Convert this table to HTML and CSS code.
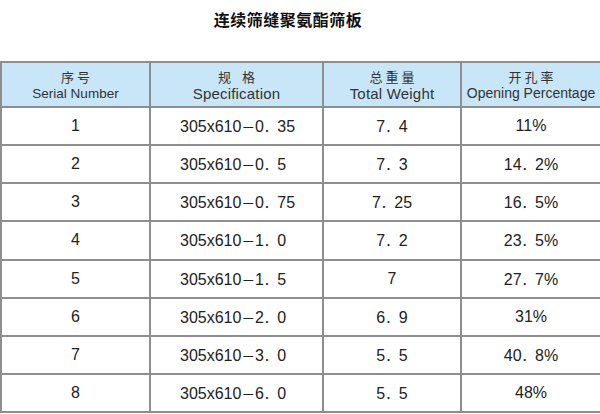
FILE: index.html
```html
<!DOCTYPE html>
<html lang="zh">
<head>
<meta charset="utf-8">
<link rel="stylesheet" href="styles.css">
</head>
<body>
<div class="page">
  <h1 class="title">连续筛缝聚氨酯筛板</h1>
  <table class="spec">
    <colgroup>
      <col class="c1"><col class="c2"><col class="c3"><col class="c4">
    </colgroup>
    <thead>
      <tr>
        <th><span class="zh">序&nbsp;号</span><span class="en en-serial">Serial Number</span></th>
        <th><span class="zh zh-wide">规&nbsp;格</span><span class="en en-big">Specification</span></th>
        <th><span class="zh zh-spaced">总重量</span><span class="en en-big">Total Weight</span></th>
        <th><span class="zh zh-spaced">开孔率</span><span class="en en-open">Opening Percentage</span></th>
      </tr>
    </thead>
    <tbody>
      <tr><td>1</td><td class="sz">305x610<span class="fw">－</span>0<span class="fw">．</span>35</td><td>7<span class="fw">．</span>4</td><td>11%</td></tr>
      <tr><td>2</td><td class="sz">305x610<span class="fw">－</span>0<span class="fw">．</span>5</td><td>7<span class="fw">．</span>3</td><td>14<span class="fw">．</span>2%</td></tr>
      <tr><td>3</td><td class="sz">305x610<span class="fw">－</span>0<span class="fw">．</span>75</td><td>7<span class="fw">．</span>25</td><td>16<span class="fw">．</span>5%</td></tr>
      <tr><td>4</td><td class="sz">305x610<span class="fw">－</span>1<span class="fw">．</span>0</td><td>7<span class="fw">．</span>2</td><td>23<span class="fw">．</span>5%</td></tr>
      <tr><td>5</td><td class="sz">305x610<span class="fw">－</span>1<span class="fw">．</span>5</td><td>7</td><td>27<span class="fw">．</span>7%</td></tr>
      <tr><td>6</td><td class="sz">305x610<span class="fw">－</span>2<span class="fw">．</span>0</td><td>6<span class="fw">．</span>9</td><td>31%</td></tr>
      <tr><td>7</td><td class="sz">305x610<span class="fw">－</span>3<span class="fw">．</span>0</td><td>5<span class="fw">．</span>5</td><td>40<span class="fw">．</span>8%</td></tr>
      <tr><td>8</td><td class="sz">305x610<span class="fw">－</span>6<span class="fw">．</span>0</td><td>5<span class="fw">．</span>5</td><td>48%</td></tr>
    </tbody>
  </table>
</div>
</body>
</html>
```
FILE: styles.css
```css
html, body {
  margin: 0;
  padding: 0;
  background: #ffffff;
}
.page {
  width: 600px;
  font-family: "Liberation Sans", "Noto Sans CJK SC", sans-serif;
  color: #222;
}
.title {
  margin: 0;
  height: 61px;
  box-sizing: border-box;
  padding: 9px 24px 0 0;
  text-align: center;
  font-family: "Noto Sans CJK SC", sans-serif;
  font-size: 16px;
  font-weight: 700;
  letter-spacing: 0.5px;
  line-height: 20px;
  color: #111;
}
.spec {
  border-collapse: collapse;
  width: 600px;
  table-layout: fixed;
}
.c1 { width: 149px; }
.c2 { width: 173px; }
.c3 { width: 138px; }
.c4 { width: 140px; }
.spec th, .spec td {
  border: 2px solid #8e8e8e;
  text-align: center;
  padding: 0;
}
.spec th {
  background: #c8e6f7;
  height: 43px;
  font-weight: 400;
  color: #333;
  vertical-align: middle;
}
.zh, .en {
  display: block;
  line-height: 17px;
  white-space: nowrap;
}
.zh {
  font-family: "Noto Sans CJK SC", sans-serif;
  font-size: 13px;
}
.zh-wide {
  letter-spacing: 4px;
  padding-left: 4px;
}
.zh-spaced {
  letter-spacing: 3px;
  padding-left: 3px;
}
.en-serial { font-size: 13.5px; }
.en-big { font-size: 15px; letter-spacing: 0.2px; }
.en-open { font-size: 14px; }
.spec td {
  height: 36.125px;
  font-size: 16px;
  color: #222;
  vertical-align: middle;
}
.spec td.sz {
  text-align: left;
  padding-left: 29px;
}
.fw {
  font-family: "Noto Sans CJK SC", sans-serif;
  font-size: 13.5px;
}
```
